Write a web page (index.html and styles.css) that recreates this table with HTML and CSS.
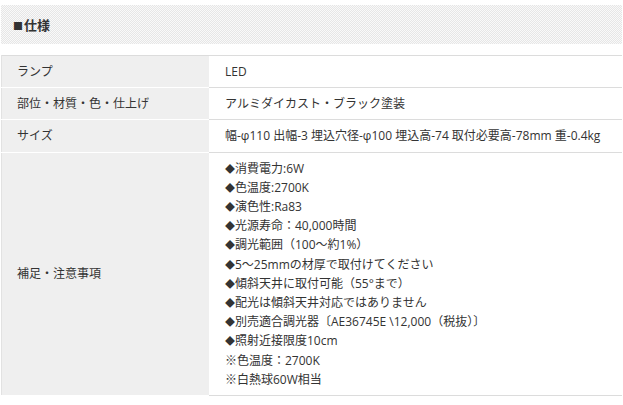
FILE: index.html
```html
<!DOCTYPE html>
<html lang="ja">
<head>
<meta charset="utf-8">
<link rel="stylesheet" href="styles.css">
</head>
<body>
<div class="page">
  <h2 class="spec-title"><span class="sq">■</span>仕様</h2>
  <table class="spec">
    <tr><th>ランプ</th><td>LED</td></tr>
    <tr><th>部位・材質・色・仕上げ</th><td>アルミダイカスト・ブラック塗装</td></tr>
    <tr><th>サイズ</th><td>幅-φ110 出幅-3 埋込穴径-φ100 埋込高-74 取付必要高-78mm 重-0.4kg</td></tr>
    <tr><th>補足・注意事項</th><td><span class="dia">◆</span>消費電力:6W<br><span class="dia">◆</span>色温度:2700K<br><span class="dia">◆</span>演色性:Ra83<br><span class="dia">◆</span>光源寿命：40,000時間<br><span class="dia">◆</span>調光範囲（100～約1%）<br><span class="dia">◆</span>5～25mmの材厚で取付けてください<br><span class="dia">◆</span>傾斜天井に取付可能（55°まで）<br><span class="dia">◆</span>配光は傾斜天井対応ではありません<br><span class="dia">◆</span>別売適合調光器〔AE36745E \12,000（税抜）〕<br><span class="dia">◆</span>照射近接限度10cm<br>※色温度：2700K<br>※白熱球60W相当</td></tr>
  </table>
</div>
</body>
</html>
```

FILE: styles.css
```css
html, body {
  margin: 0;
  padding: 0;
  background: #fff;
}
body {
  font-family: "Open Sans", "Noto Sans CJK JP", sans-serif;
  color: #333;
  font-size: 12px;
}
.page {
  padding: 5px 1px 0 1px;
}
.spec-title {
  margin: 0;
  height: 39px;
  line-height: 40px;
  padding-left: 12px;
  font-size: 13px;
  font-weight: bold;
  color: #333;
  background: repeating-conic-gradient(#e6e6e6 0 25%, #f9f9f9 0 50%) 0 0 / 2px 2px;
}
.sq {
  font-family: "Noto Sans CJK JP", sans-serif;
  font-size: 10px;
  margin-right: 1px;
}
.dia {
  font-family: "Noto Sans CJK JP", sans-serif;
  font-size: 10px;
}
.spec {
  margin-top: 11px;
  width: 100%;
  border-collapse: collapse;
  border-top: 1px solid #dcdcdc;
}
.spec th, .spec td {
  padding: 6px 15px;
  line-height: 19.2px;
  text-align: left;
  font-weight: normal;
  vertical-align: middle;
}
.spec th {
  width: 177px;
  background: #efefef;
  border-bottom: 1px solid #fff;
  border-left: 1px solid #e2e2e2;
}
.spec td {
  padding-left: 16px;
  border-bottom: 1px solid #dcdcdc;
}
```
